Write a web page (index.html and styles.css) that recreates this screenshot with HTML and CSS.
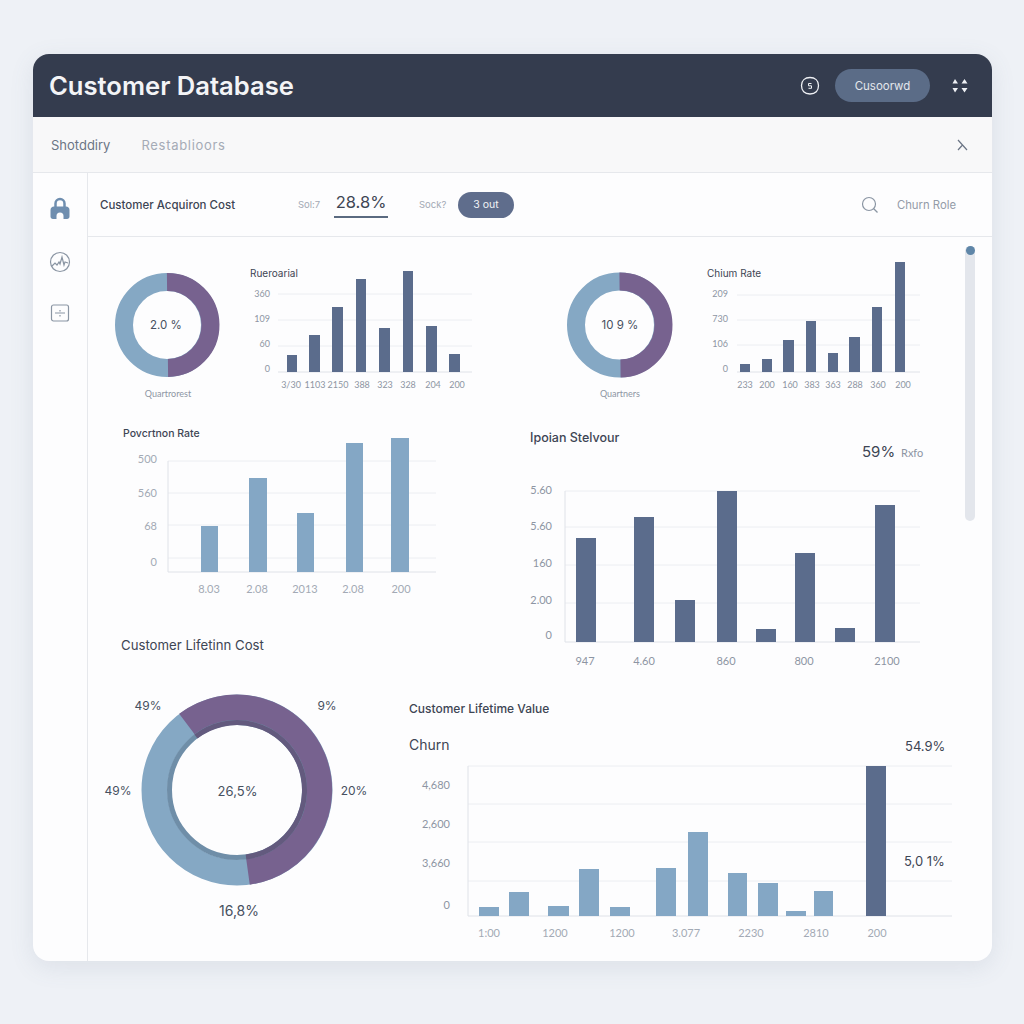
FILE: index.html
```html
<!DOCTYPE html>
<html lang="en">
<head>
    <meta charset="UTF-8">
    <meta name="viewport" content="width=device-width, initial-scale=1.0">
    <title>Customer Database</title>
    <link rel="stylesheet" href="styles.css">
</head>
<body>
    <div class="app">
        <header class="topbar">
            <h1>Customer Database</h1>
            <div class="topbar-actions">
                <svg class="icon" width="20" height="20" viewBox="0 0 20 20">
                    <path class="stroke-light" d="M10 1.500c5 0 8.500 3 8.500 8 0 5.500-3 8.500-8.500 8.500-5.500 0-8.500-3-8.500-8.500 0-5 3.500-8 8.500-8z"/>
                    <path class="stroke-light thin" d="M11.500 7.500H8.500v2.300h3v2.500h-3"/>
                </svg>
                <button class="pill-btn">Cusoorwd</button>
                <svg class="icon" width="16" height="16" viewBox="0 0 16 16">
                    <path class="fill-light" d="M3 1 6 5.500H0.500zM12.500 1 15.500 5.500H9.500zM0.500 10H6L3 14.500zM9.500 10H15.500L12.500 14.500z"/>
                </svg>
            </div>
        </header>

        <nav class="tabs">
            <a class="tab active">Shotddiry</a>
            <a class="tab">Restablioors</a>
            <svg class="tabs-close" width="12" height="12" viewBox="0 0 12 12">
                <path class="stroke-muted" d="M2 1l9 10M2 11l4.500-5"/>
            </svg>
        </nav>

        <div class="layout">
            <aside class="sidebar">
                <!-- lock -->
                <svg class="side-icon" width="22" height="24" viewBox="0 0 22 24">
                    <path class="stroke-blue" d="M6.500 11V7.500a4.500 4.500 0 0 1 9 0V11"/>
                    <path class="fill-blue" d="M5 10.500h12c2 0 3.500 1.500 3.500 3.500v6.500c0 1.500-1 2.500-2.500 2.500h-3.500v-3a3.500 3.500 0 0 0-7 0v3H4c-1.500 0-2.500-1-2.500-2.500V14c0-2 1.500-3.500 3.500-3.500z"/>
                </svg>
                <!-- pulse -->
                <svg class="side-icon" width="22" height="22" viewBox="0 0 22 22">
                    <circle class="stroke-grey" cx="11" cy="11" r="9.500"/>
                    <path class="stroke-grey" d="M3 15l3-3 2 2 2-3 1 2 2-7 2 8 1-3 3 1"/>
                </svg>
                <!-- panel -->
                <svg class="side-icon" width="20" height="18" viewBox="0 0 20 18">
                    <rect class="stroke-grey" x="1.500" y="1" width="17" height="16" rx="2"/>
                    <path class="stroke-grey" d="M5 9h10M10 6v1.500M10 11v1.500"/>
                </svg>
            </aside>

            <main class="main">
                <div class="toolbar">
                    <span class="toolbar-title">Customer Acquiron Cost</span>
                    <span class="stat-label">Sol:7</span>
                    <span class="stat-value">28.8%</span>
                    <span class="stat-label second">Sock?</span>
                    <span class="status-pill">3 out</span>
                    <svg class="search-icon" width="18" height="18" viewBox="0 0 18 18">
                        <circle class="stroke-grey" cx="8" cy="8" r="6.500"/>
                        <path class="stroke-grey" d="M12.500 12.500l4 4"/>
                    </svg>
                    <span class="toolbar-link">Churn Role</span>
                </div>

                <div class="content">
                    <div class="charts">
                        <section class="kpi-row">
                            <svg width="452" height="150" viewBox="115 258 452 150">
                                <circle class="ring blue" cx="167" cy="325" r="43"/>
                                <path class="ring purple" d="M167 282A43 43 0 0 1 168 368"/>
                                <text class="donut-value mid" x="166" y="329">2.0 %</text>
                                <text class="caption mid" x="168" y="397">Quartrorest</text>

                                <text class="chart-title small" x="250" y="277">Rueroarial</text>
                                <line class="grid" x1="278" y1="294" x2="472" y2="294"/>
                                <line class="grid" x1="278" y1="320" x2="472" y2="320"/>
                                <line class="grid" x1="278" y1="346" x2="472" y2="346"/>
                                <line class="axis" x1="278" y1="372" x2="472" y2="372"/>
                                <text class="tick end" x="270" y="297">360</text>
                                <text class="tick end" x="270" y="322">109</text>
                                <text class="tick end" x="270" y="347">60</text>
                                <text class="tick end" x="270" y="372">0</text>
                                <rect class="bar dark" x="287" y="355" width="10" height="17"/>
                                <rect class="bar dark" x="309" y="335" width="11" height="37"/>
                                <rect class="bar dark" x="332" y="307" width="11" height="65"/>
                                <rect class="bar dark" x="356" y="279" width="10" height="93"/>
                                <rect class="bar dark" x="379" y="328" width="11" height="44"/>
                                <rect class="bar dark" x="403" y="271" width="10" height="101"/>
                                <rect class="bar dark" x="426" y="326" width="11" height="46"/>
                                <rect class="bar dark" x="449" y="354" width="11" height="18"/>
                                <text class="tick mid" x="291" y="388">3/30</text>
                                <text class="tick mid" x="315" y="388">1103</text>
                                <text class="tick mid" x="338" y="388">2150</text>
                                <text class="tick mid" x="362" y="388">388</text>
                                <text class="tick mid" x="385" y="388">323</text>
                                <text class="tick mid" x="408" y="388">328</text>
                                <text class="tick mid" x="433" y="388">204</text>
                                <text class="tick mid" x="457" y="388">200</text>
                            </svg>
                            <svg width="385" height="150" viewBox="567 258 385 150">
                                <circle class="ring blue" cx="619.500" cy="325" r="43.500"/>
                                <path class="ring purple" d="M619.500 281.500A43.500 43.500 0 0 1 620.500 368.500"/>
                                <text class="donut-value mid" x="620" y="329">10 9 %</text>
                                <text class="caption mid" x="620" y="397">Quartners</text>

                                <text class="chart-title small" x="707" y="277">Chium Rate</text>
                                <line class="grid" x1="737" y1="295" x2="920" y2="295"/>
                                <line class="grid" x1="737" y1="320" x2="920" y2="320"/>
                                <line class="grid" x1="737" y1="345" x2="920" y2="345"/>
                                <line class="axis" x1="737" y1="372" x2="920" y2="372"/>
                                <text class="tick end" x="728" y="297">209</text>
                                <text class="tick end" x="728" y="322">730</text>
                                <text class="tick end" x="728" y="347">106</text>
                                <text class="tick end" x="728" y="372">0</text>
                                <rect class="bar dark" x="740" y="364" width="10" height="8"/>
                                <rect class="bar dark" x="762" y="359" width="10" height="13"/>
                                <rect class="bar dark" x="783" y="340" width="11" height="32"/>
                                <rect class="bar dark" x="806" y="321" width="10" height="51"/>
                                <rect class="bar dark" x="828" y="353" width="10" height="19"/>
                                <rect class="bar dark" x="849" y="337" width="11" height="35"/>
                                <rect class="bar dark" x="872" y="307" width="10" height="65"/>
                                <rect class="bar dark" x="895" y="262" width="10" height="110"/>
                                <text class="tick mid" x="745" y="388">233</text>
                                <text class="tick mid" x="767" y="388">200</text>
                                <text class="tick mid" x="790" y="388">160</text>
                                <text class="tick mid" x="812" y="388">383</text>
                                <text class="tick mid" x="833" y="388">363</text>
                                <text class="tick mid" x="855" y="388">288</text>
                                <text class="tick mid" x="878" y="388">360</text>
                                <text class="tick mid" x="903" y="388">200</text>
                            </svg>
                        </section>

                        <section class="detail-grid">
                            <svg class="chart-a" width="345" height="224" viewBox="100 408 345 224">
                                <text class="chart-title" x="123" y="437">Povcrtnon Rate</text>
                                <line class="grid" x1="168" y1="461" x2="436" y2="461"/>
                                <line class="grid" x1="168" y1="493" x2="436" y2="493"/>
                                <line class="grid" x1="168" y1="525" x2="436" y2="525"/>
                                <line class="grid" x1="168" y1="558" x2="436" y2="558"/>
                                <line class="axis" x1="168" y1="461" x2="168" y2="572"/>
                                <line class="axis" x1="168" y1="572" x2="436" y2="572"/>
                                <text class="tick-md pale end" x="157" y="463">500</text>
                                <text class="tick-md pale end" x="157" y="497">560</text>
                                <text class="tick-md pale end" x="157" y="530">68</text>
                                <text class="tick-md pale end" x="157" y="566">0</text>
                                <rect class="bar light" x="201" y="526" width="17" height="46"/>
                                <rect class="bar light" x="249" y="478" width="18" height="94"/>
                                <rect class="bar light" x="297" y="513" width="17" height="59"/>
                                <rect class="bar light" x="346" y="443" width="17" height="129"/>
                                <rect class="bar light" x="391" y="438" width="18" height="134"/>
                                <text class="tick-md pale mid" x="209" y="593">8.03</text>
                                <text class="tick-md pale mid" x="257" y="593">2.08</text>
                                <text class="tick-md pale mid" x="305" y="593">2013</text>
                                <text class="tick-md pale mid" x="353" y="593">2.08</text>
                                <text class="tick-md pale mid" x="401" y="593">200</text>
                            </svg>

                            <svg class="chart-b" width="440" height="287" viewBox="525 408 440 287">
                                <text class="chart-title wide" x="530" y="442">Ipoian Stelvour</text>
                                <text class="kpi-value" x="862" y="457">59%</text>
                                <text class="tick-md" x="901" y="457">Rxfo</text>
                                <line class="grid" x1="565" y1="491" x2="920" y2="491"/>
                                <line class="grid" x1="565" y1="527" x2="920" y2="527"/>
                                <line class="grid" x1="565" y1="565" x2="920" y2="565"/>
                                <line class="grid" x1="565" y1="603" x2="920" y2="603"/>
                                <line class="axis" x1="565" y1="491" x2="565" y2="642"/>
                                <line class="axis" x1="565" y1="642" x2="920" y2="642"/>
                                <text class="tick-md end" x="552" y="494">5.60</text>
                                <text class="tick-md end" x="552" y="530">5.60</text>
                                <text class="tick-md end" x="552" y="567">160</text>
                                <text class="tick-md end" x="552" y="604">2.00</text>
                                <text class="tick-md end" x="552" y="639">0</text>
                                <rect class="bar dark" x="576" y="538" width="20" height="104"/>
                                <rect class="bar dark" x="634" y="517" width="20" height="125"/>
                                <rect class="bar dark" x="675" y="600" width="20" height="42"/>
                                <rect class="bar dark" x="717" y="491" width="20" height="151"/>
                                <rect class="bar dark" x="756" y="629" width="20" height="13"/>
                                <rect class="bar dark" x="795" y="553" width="20" height="89"/>
                                <rect class="bar dark" x="835" y="628" width="20" height="14"/>
                                <rect class="bar dark" x="875" y="505" width="20" height="137"/>
                                <text class="tick-md mid" x="585" y="665">947</text>
                                <text class="tick-md mid" x="644" y="665">4.60</text>
                                <text class="tick-md mid" x="726" y="665">860</text>
                                <text class="tick-md mid" x="804" y="665">800</text>
                                <text class="tick-md mid" x="887" y="665">2100</text>
                            </svg>

                            <svg class="chart-c" width="300" height="300" viewBox="100 632 300 300">
                                <text class="section-title" x="121" y="650">Customer Lifetinn Cost</text>
                                <circle class="ring-big blue" cx="237" cy="790" r="82.500"/>
                                <path class="ring-big purple" d="M187 724.200A82.500 82.500 0 1 1 248 871.800"/>
                                <circle class="ring-inner blue-dark" cx="237" cy="790" r="67.500"/>
                                <path class="ring-inner purple-dark" d="M196 736.500A67.500 67.500 0 1 1 246 857"/>
                                <text class="donut-label wide mid" x="237.500" y="796">26,5%</text>
                                <text class="donut-label mid" x="148" y="710">49%</text>
                                <text class="donut-label mid" x="327" y="710">9%</text>
                                <text class="donut-label mid" x="118" y="795">49%</text>
                                <text class="donut-label mid" x="354" y="795">20%</text>
                                <text class="donut-label big mid" x="239" y="916">16,8%</text>
                            </svg>

                            <svg class="chart-d" width="565" height="245" viewBox="400 695 565 245">
                                <text class="chart-title medium" x="409" y="713">Customer Lifetime Value</text>
                                <text class="kpi-churn" x="409" y="750">Churn</text>
                                <text class="kpi-small" x="905" y="751">54.9%</text>
                                <line class="grid" x1="468" y1="766" x2="952" y2="766"/>
                                <line class="grid" x1="468" y1="804" x2="952" y2="804"/>
                                <line class="grid" x1="468" y1="842" x2="952" y2="842"/>
                                <line class="grid" x1="468" y1="881" x2="952" y2="881"/>
                                <line class="axis" x1="468" y1="766" x2="468" y2="916"/>
                                <line class="axis" x1="468" y1="916" x2="952" y2="916"/>
                                <text class="tick-md end" x="450" y="789">4,680</text>
                                <text class="tick-md end" x="450" y="828">2,600</text>
                                <text class="tick-md end" x="450" y="867">3,660</text>
                                <text class="tick-md end" x="450" y="909">0</text>
                                <rect class="bar light" x="479" y="907" width="20" height="9"/>
                                <rect class="bar light" x="509" y="892" width="20" height="24"/>
                                <rect class="bar light" x="548" y="906" width="21" height="10"/>
                                <rect class="bar light" x="579" y="869" width="20" height="47"/>
                                <rect class="bar light" x="610" y="907" width="20" height="9"/>
                                <rect class="bar light" x="656" y="868" width="20" height="48"/>
                                <rect class="bar light" x="688" y="832" width="20" height="84"/>
                                <rect class="bar light" x="728" y="873" width="19" height="43"/>
                                <rect class="bar light" x="758" y="883" width="20" height="33"/>
                                <rect class="bar light" x="786" y="911" width="20" height="5"/>
                                <rect class="bar light" x="814" y="891" width="19" height="25"/>
                                <rect class="bar dark" x="866" y="766" width="20" height="150"/>
                                <text class="kpi-small" x="904" y="866">5,0 1%</text>
                                <text class="tick-md pale mid" x="489" y="937">1:00</text>
                                <text class="tick-md pale mid" x="555" y="937">1200</text>
                                <text class="tick-md pale mid" x="622" y="937">1200</text>
                                <text class="tick-md pale mid" x="686" y="937">3.077</text>
                                <text class="tick-md pale mid" x="751" y="937">2230</text>
                                <text class="tick-md pale mid" x="816" y="937">2810</text>
                                <text class="tick-md pale mid" x="877" y="937">200</text>
                            </svg>
                        </section>
                    </div>

                    <div class="scrollbar"><span class="scroll-thumb"></span></div>
                </div>
            </main>
        </div>
    </div>
</body>
</html>
```

FILE: styles.css
```css
/* Global Styles */
body {
    margin: 0;
    padding: 54px 32px 63px 33px;
    background: #eef1f6;
    font-family: 'Inter', 'Liberation Sans', sans-serif;
    color: #3d4554;
}

.app {
    height: 907px;
    display: flex;
    flex-direction: column;
    background: #fdfdfe;
    border-radius: 16px;
    overflow: hidden;
    box-shadow: 0 6px 24px rgba(90, 105, 135, 0.12);
}

/* Header */
.topbar {
    height: 63px;
    flex-shrink: 0;
    display: flex;
    align-items: center;
    justify-content: space-between;
    padding: 0 24px 0 16px;
    background: #343c4e;
}

.topbar h1 {
    margin: 0;
    font-size: 25.600px;
    font-weight: 600;
    color: #f3f4f6;
}

.topbar-actions {
    display: flex;
    align-items: center;
}

.pill-btn {
    width: 95px;
    height: 33px;
    margin: 0 22px 0 15px;
    border: none;
    border-radius: 17px;
    background: #5b6c87;
    color: #e4e7ec;
    font-family: inherit;
    font-size: 11.500px;
}

.icon {
    display: block;
}

/* Tabs */
.tabs {
    height: 55px;
    flex-shrink: 0;
    display: flex;
    align-items: center;
    gap: 31px;
    padding: 0 24px 0 18px;
    background: #f8f8f9;
    border-bottom: 1px solid #e6e8ec;
    font-size: 13px;
}

.tab {
    color: #a5abb6;
    letter-spacing: 0.700px;
}

.tab.active {
    color: #6b7585;
    letter-spacing: 0;
}

.tabs-close {
    margin-left: auto;
}

/* Sidebar */
.layout {
    flex: 1;
    display: flex;
    min-height: 0;
}

.sidebar {
    width: 54px;
    flex-shrink: 0;
    display: flex;
    flex-direction: column;
    align-items: center;
    padding-top: 23px;
    gap: 31px;
    border-right: 1px solid #e6e8ec;
}

.side-icon {
    display: block;
}

/* Toolbar */
.main {
    flex: 1;
    min-width: 0;
}

.toolbar {
    height: 63px;
    display: flex;
    align-items: center;
    padding: 0 36px 0 12px;
    border-bottom: 1px solid #e6e8ec;
}

.toolbar-title {
    width: 198px;
    font-size: 11.500px;
    font-weight: 500;
}

.stat-label {
    width: 36px;
    font-size: 9.500px;
    color: #a3a9b4;
}

.stat-label.second {
    width: 39px;
    margin-left: 31px;
}

.stat-value {
    width: 54px;
    padding-bottom: 4px;
    border-bottom: 2px solid #5a6a80;
    font-size: 16.500px;
    line-height: 20px;
    text-align: center;
}

.status-pill {
    width: 56px;
    height: 26px;
    border-radius: 13px;
    background: #5f6d8c;
    color: #f1f3f6;
    font-size: 10.500px;
    line-height: 26px;
    text-align: center;
}

.search-icon {
    margin-left: auto;
}

.toolbar-link {
    margin-left: 18px;
    font-size: 11.300px;
    color: #949ba8;
}

/* Content */
.content {
    display: flex;
}

.charts {
    width: 877px;
}

.charts svg {
    display: block;
}

.kpi-row {
    display: flex;
    padding: 21px 0 0 27px;
}

.detail-grid {
    display: grid;
    grid-template-columns: 300px 125px 440px;
    grid-template-rows: 224px 63px 245px;
    padding-left: 12px;
}

.chart-a {
    grid-column: 1 / 3;
    grid-row: 1;
}

.chart-b {
    grid-column: 3;
    grid-row: 1 / 3;
}

.chart-c {
    grid-column: 1;
    grid-row: 2 / 4;
}

.chart-d {
    grid-column: 2 / 4;
    grid-row: 3;
}

.scrollbar {
    width: 10px;
    height: 275px;
    margin-top: 9px;
    border-radius: 5px;
    background: #e3e6ec;
}

.scroll-thumb {
    display: block;
    width: 9px;
    height: 9px;
    margin: 0 auto;
    border-radius: 50%;
    background: #5f86a8;
}

/* Chart parts */
.grid {
    stroke: #eceef2;
    stroke-width: 1;
}

.axis {
    stroke: #dfe2e8;
    stroke-width: 1;
}

.bar.dark {
    fill: #5b6c8c;
}

.bar.light {
    fill: #84a7c5;
}

.ring,
.ring-big,
.ring-inner {
    fill: none;
}

.ring {
    stroke-width: 18px;
}

.ring-big {
    stroke-width: 26px;
}

.ring-inner {
    stroke-width: 5px;
}

.blue {
    stroke: #85a8c4;
}

.purple {
    stroke: #77628f;
}

.blue-dark {
    stroke: #6f8ea8;
}

.purple-dark {
    stroke: #635a7e;
}

text {
    font-family: 'Inter', 'Liberation Sans', sans-serif;
}

.mid {
    text-anchor: middle;
}

.end {
    text-anchor: end;
}

.tick,
.tick-md,
.caption {
    font-family: 'Lato', 'Liberation Sans', sans-serif;
    fill: #8d95a3;
}

.tick,
.caption {
    font-size: 9px;
}

.tick-md {
    font-size: 11px;
}

.tick-md.pale {
    fill: #a3aab5;
}

.chart-title {
    font-size: 10.500px;
    font-weight: 500;
    fill: #3d4554;
}

.chart-title.small {
    font-size: 10px;
    font-weight: 400;
}

.chart-title.medium {
    font-size: 12px;
}

.chart-title.wide {
    font-size: 12.500px;
}

.section-title {
    font-size: 13.200px;
    font-weight: 400;
    fill: #3d4554;
}

.donut-value {
    font-size: 11.500px;
    fill: #47505f;
}

.donut-label {
    font-size: 12px;
    fill: #47505f;
}

.donut-label.wide {
    font-size: 13px;
}

.donut-label.big {
    font-size: 14px;
}

.kpi-value {
    font-size: 15px;
    fill: #3d4554;
}

.kpi-small {
    font-size: 13px;
    fill: #3d4554;
}

.kpi-churn {
    font-size: 14px;
    fill: #3d4554;
}

/* Icon strokes */
.stroke-light {
    fill: none;
    stroke: #eef0f4;
    stroke-width: 1.300;
}

.stroke-light.thin {
    stroke-width: 1;
}

.fill-light {
    fill: #eef0f4;
}

.stroke-muted {
    fill: none;
    stroke: #6b7585;
    stroke-width: 1.200;
}

.stroke-grey {
    fill: none;
    stroke: #8a95a3;
    stroke-width: 1.200;
}

.stroke-blue {
    fill: none;
    stroke: #6f8eaf;
    stroke-width: 2.500;
}

.fill-blue {
    fill: #6f8eaf;
}
```
